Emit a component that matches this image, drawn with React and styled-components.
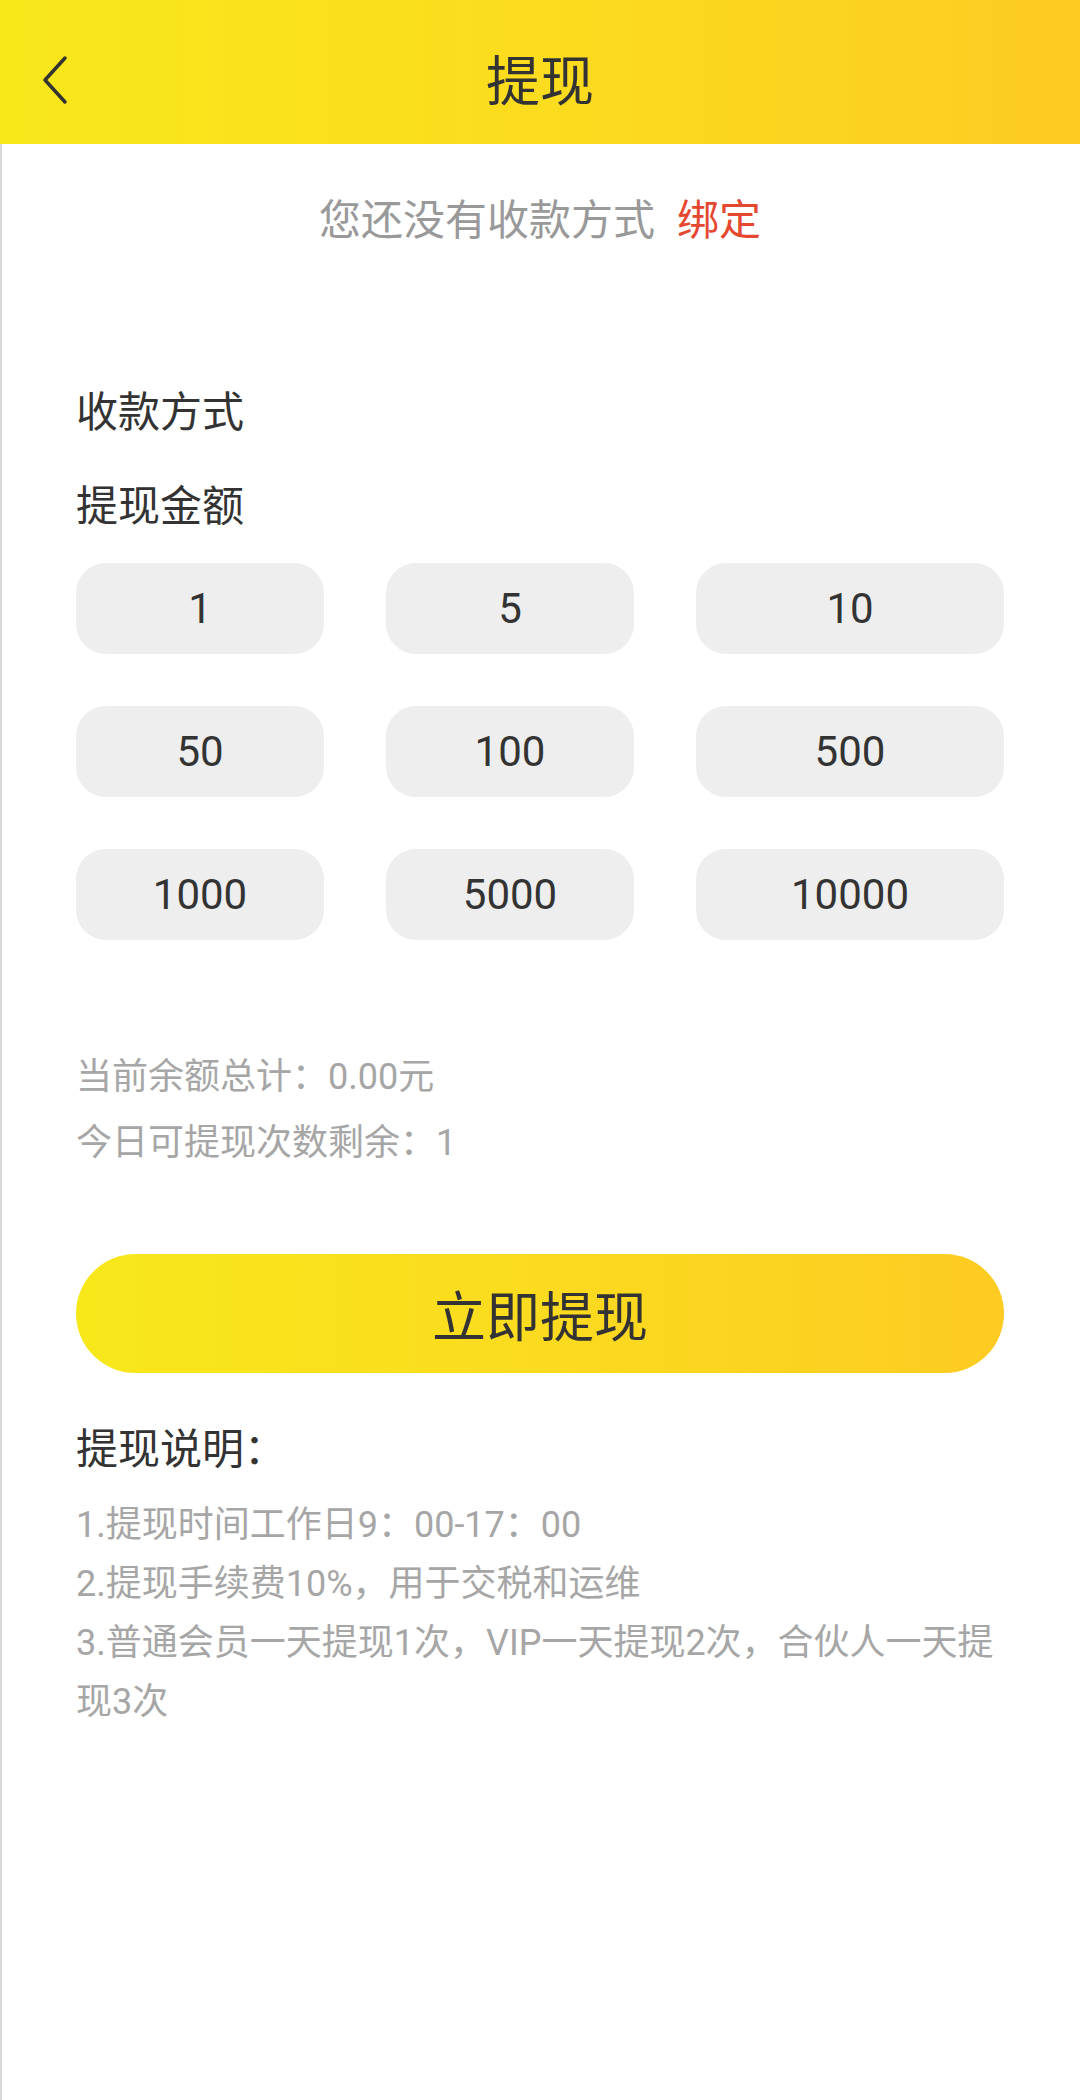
import styled, { createGlobalStyle } from 'styled-components';

const GlobalStyle = createGlobalStyle`
  html, body {
    margin: 0;
    padding: 0;
    background: #fff;
  }
  body {
    font-family: Roboto, "Noto Sans CJK SC", sans-serif;
    color: #333;
  }
`;

const Page = styled.div`
  width: 1080px;
  min-height: 2100px;
  box-shadow: inset 2px 0 0 #d9d9d9;
`;

const Header = styled.header`
  height: 144px;
  box-sizing: border-box;
  padding-top: 10px;
  display: flex;
  align-items: center;
  justify-content: center;
  position: relative;
  background: linear-gradient(90deg, #f8e81a 0%, #fbdc1e 50%, #fdcb22 100%);
`;

const BackButton = styled.button`
  position: absolute;
  left: 36px;
  top: 50px;
  width: 40px;
  height: 60px;
  padding: 0;
  border: none;
  background: none;
  display: flex;
  align-items: center;
  justify-content: center;
`;

const Title = styled.h1`
  margin: 0;
  font-size: 54px;
  font-weight: 400;
  color: #333;
`;

const Content = styled.main`
  padding: 0 76px;
`;

const Notice = styled.p`
  margin: 47px 0 0;
  text-align: center;
  font-size: 42px;
  line-height: 60px;
  color: #999;
`;

const BindLink = styled.span`
  color: #e5472f;
  margin-left: 22px;
`;

const Label = styled.div`
  font-size: 42px;
  line-height: 60px;
  color: #333;
  margin-top: ${(p) => p.$top}px;
`;

const AmountGrid = styled.div`
  margin-top: 26px;
  display: grid;
  grid-template-columns: 248px 248px 1fr;
  column-gap: 62px;
  row-gap: 52px;
`;

const AmountButton = styled.button`
  height: 91px;
  border: none;
  border-radius: 30px;
  background: #eeeeee;
  font-family: inherit;
  font-size: 42px;
  color: #333;
  padding: 0;
`;

const Balance = styled.div`
  margin-top: 104px;
`;

const InfoLine = styled.div`
  font-size: 36px;
  line-height: 66px;
  color: #a6a6a6;
`;

const SubmitButton = styled.button`
  margin-top: 78px;
  width: 100%;
  height: 119px;
  border: none;
  border-radius: 60px;
  background: linear-gradient(90deg, #f7e81a 0%, #fbdb1f 50%, #fdcb22 100%);
  font-family: inherit;
  font-size: 54px;
  color: #333;
`;

const RulesTitle = styled.div`
  margin-top: 47px;
  font-size: 42px;
  line-height: 60px;
  color: #333;
`;

const Rules = styled.div`
  margin-top: 16px;
  font-size: 36px;
  line-height: 59px;
  color: #a6a6a6;
`;

const amounts = [1, 5, 10, 50, 100, 500, 1000, 5000, 10000];

const rules = [
  '1.提现时间工作日9：00-17：00',
  '2.提现手续费10%，用于交税和运维',
  '3.普通会员一天提现1次，VIP一天提现2次，合伙人一天提现3次',
];

export default function App() {
  return (
    <Page>
      <GlobalStyle />
      <Header>
        <BackButton aria-label="返回">
          <svg width="30" height="52" viewBox="0 0 30 52">
            <path d="M24 4 L4 26 L24 48" fill="none" stroke="#333" strokeWidth="3.5" strokeLinecap="round" strokeLinejoin="round" />
          </svg>
        </BackButton>
        <Title>提现</Title>
      </Header>
      <Content>
        <Notice>
          您还没有收款方式<BindLink>绑定</BindLink>
        </Notice>
        <Label $top={132}>收款方式</Label>
        <Label $top={34}>提现金额</Label>
        <AmountGrid>
          {amounts.map((a) => (
            <AmountButton key={a}>{a}</AmountButton>
          ))}
        </AmountGrid>
        <Balance>
          <InfoLine>当前余额总计：0.00元</InfoLine>
          <InfoLine>今日可提现次数剩余：1</InfoLine>
        </Balance>
        <SubmitButton>立即提现</SubmitButton>
        <RulesTitle>提现说明：</RulesTitle>
        <Rules>
          {rules.map((r) => (
            <div key={r}>{r}</div>
          ))}
        </Rules>
      </Content>
    </Page>
  );
}
